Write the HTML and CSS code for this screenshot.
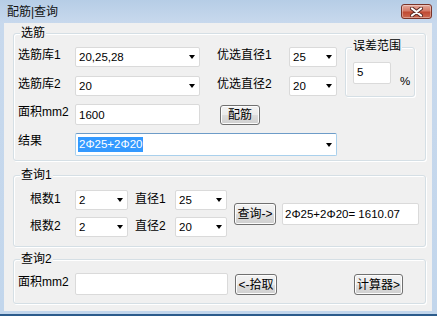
FILE: index.html
```html
<!DOCTYPE html>
<html lang="zh-CN">
<head>
    <meta charset="UTF-8">
    <title>配筋|查询</title>
    <link rel="stylesheet" href="styles.css">
</head>
<body>
<div class="window">
    <div class="titlebar">
        <span class="title">配筋|查询</span>
        <span class="close">
            <svg width="13" height="10" viewBox="0 0 13 10">
                <path d="M2 1.5 L11 8.5 M11 1.5 L2 8.5" stroke="#5a2a24" stroke-width="4" stroke-linecap="round"/>
                <path d="M2 1.5 L11 8.5 M11 1.5 L2 8.5" stroke="#fff" stroke-width="2.2" stroke-linecap="round"/>
            </svg>
        </span>
    </div>
    <div class="client">
        <!-- 选筋 -->
        <div class="group g-pick">
            <span class="caption">选筋</span>
            <span class="lbl r1 c1">选筋库1</span>
            <div class="combo r1 c2"><span>20,25,28</span></div>
            <span class="lbl r1 c4">优选直径1</span>
            <div class="combo r1 c5"><span>25</span></div>
            <div class="group err">
                <span class="caption">误差范围</span>
                <div class="textbox tb-err">5</div>
                <span class="pct">%</span>
            </div>

            <span class="lbl r2 c1">选筋库2</span>
            <div class="combo r2 c2"><span>20</span></div>
            <span class="lbl r2 c4">优选直径2</span>
            <div class="combo r2 c5"><span>20</span></div>

            <span class="lbl r3 c1">面积<i>mm2</i></span>
            <div class="textbox r3 c2 tb-area">1600</div>
            <button class="btn btn-calc">配筋</button>

            <span class="lbl r4 c1">结果</span>
            <div class="combo focus result"><span class="sel">2Φ25+2Φ20</span></div>
        </div>

        <!-- 查询1 -->
        <div class="group g-query1">
            <span class="caption">查询<i>1</i></span>
            <span class="lbl q1 k1">根数<i>1</i></span>
            <div class="combo q1 k2"><span>2</span></div>
            <span class="lbl q1 k3">直径<i>1</i></span>
            <div class="combo q1 k4"><span>25</span></div>
            <button class="btn btn-query">查询<i>-&gt;</i></button>
            <div class="textbox tb-sum">2Φ25+2Φ20= 1610.07</div>

            <span class="lbl q2 k1">根数<i>2</i></span>
            <div class="combo q2 k2"><span>2</span></div>
            <span class="lbl q2 k3">直径<i>2</i></span>
            <div class="combo q2 k4"><span>20</span></div>
        </div>

        <!-- 查询2 -->
        <div class="group g-query2">
            <span class="caption">查询<i>2</i></span>
            <span class="lbl">面积<i>mm2</i></span>
            <div class="textbox"></div>
            <button class="btn btn-pick"><i>&lt;-</i>拾取</button>
            <button class="btn btn-calculator">计算器<i>&gt;</i></button>
        </div>
    </div>
</div>
</body>
</html>
```

FILE: styles.css
```css
* {
    box-sizing: border-box;
}
body {
    margin: 0;
    font: 12px "Liberation Sans", "Noto Sans CJK SC", sans-serif;
    color: #000;
}
i {
    font-style: normal;
}
.window {
    width: 437px;
    height: 316px;
    display: flex;
    flex-direction: column;
    background: linear-gradient(#b6cde6, #c8d9ed 23px, #c2d6ec);
    border-bottom: 2px solid #2c5c8c;
}
.titlebar {
    height: 23px;
    display: flex;
    justify-content: space-between;
    align-items: flex-start;
    padding: 0 5px 0 7px;
}
.title {
    font-size: 12px;
    line-height: 14px;
    margin-top: 5px;
    color: #111;
}
.close {
    margin-top: 4px;
    width: 31px;
    height: 15px;
    display: flex;
    align-items: center;
    justify-content: center;
    border: 1px solid #7a3328;
    border-radius: 3px;
    background: linear-gradient(#e4a99c, #d47a67 45%, #c04a33 55%, #cc6a52);
    box-shadow: inset 0 0 0 1px rgba(255,255,255,0.35);
}
.client {
    flex: 1;
    margin: 0 5px 3px 4px;
    background: #f0f0f0;
    padding: 10px 6px 7px 9px;
}

/* group boxes */
.group {
    position: relative;
    border: 1px solid #d5dfe5;
    border-radius: 3px;
    box-shadow: inset 1px 1px 0 #fff, 1px 1px 0 #fff;
}
.caption {
    position: absolute;
    top: -8px;
    left: 6px;
    padding: 0 1px;
    line-height: 14px;
    background: #f0f0f0;
}
.g-pick {
    display: grid;
    grid-template-columns: 57px 125px 17px 72px 48px 8px 70px;
    grid-template-rows: 29px 28px 29px 23px;
    padding: 13px 0 4px 4px;
}
.g-query1 {
    margin-top: 14px;
    display: grid;
    grid-template-columns: 45px 53px 47px 52px 7px 42px 6px 137px;
    grid-template-rows: 27px 20px;
    padding: 14px 0 9px 16px;
}
.g-query2 {
    margin-top: 12px;
    display: grid;
    grid-template-columns: 57px 153px 7px 42px 77px 49px;
    grid-template-rows: 22px;
    padding: 13px 0 8px 4px;
}

.r1 { grid-row: 1; }
.r2 { grid-row: 2; }
.r3 { grid-row: 3; }
.r4 { grid-row: 4; }
.c1 { grid-column: 1; }
.c2 { grid-column: 2; }
.c4 { grid-column: 4; }
.c5 { grid-column: 5; }
.q1 { grid-row: 1; }
.q2 { grid-row: 2; }
.k1 { grid-column: 1; }
.k2 { grid-column: 2; }
.k3 { grid-column: 3; padding-left: 7px; }
.k4 { grid-column: 4; }

.lbl {
    line-height: 14px;
    padding-top: 1px;
    align-self: start;
    white-space: nowrap;
}
.g-query1 .lbl,
.g-query2 .lbl {
    padding-top: 2px;
}

/* controls */
.combo {
    align-self: start;
    height: 20px;
    display: flex;
    align-items: center;
    justify-content: space-between;
    padding: 0 4px 0 3px;
    background: #fff;
    border: 1px solid #dadada;
    border-radius: 2px;
    font-size: 11.5px;
}
.combo::after {
    content: "";
    border-top: 4px solid #000;
    border-left: 3.5px solid transparent;
    border-right: 3.5px solid transparent;
}
.combo.focus {
    border-color: #6d9cc8 #a9d0ec #a9d0ec #a9d0ec;
}
.result {
    grid-row: 4;
    grid-column: 2 / 6;
    height: 23px;
    padding-left: 2px;
}
.sel {
    background: #3399ff;
    color: #fff;
    padding: 1px 1px;
    line-height: 13px;
}
.textbox {
    align-self: start;
    height: 22px;
    display: flex;
    align-items: center;
    padding: 0 3px;
    background: #fff;
    border: 1px solid #dadada;
    border-radius: 2px;
    font-size: 11.5px;
}
.tb-area {
    height: 21px;
}
.err {
    grid-row: 1 / 3;
    grid-column: 7;
    height: 50px;
    align-self: start;
    display: flex;
    align-items: center;
    padding: 14px 0 0 7px;
    gap: 9px;
}
.err .caption {
    top: -9px;
    left: 6px;
}
.tb-err {
    width: 38px;
    align-items: flex-start;
    padding-top: 3px;
}
.pct {
    font-size: 11.5px;
    margin-top: 3px;
}
.tb-sum {
    grid-row: 1 / 3;
    grid-column: 8;
    align-self: center;
    padding-left: 2px;
}

.btn {
    align-self: start;
    height: 20px;
    padding: 0;
    font: 12px "Liberation Sans", "Noto Sans CJK SC", sans-serif;
    color: #000;
    line-height: 14px;
    border: 1px solid #707070;
    border-radius: 3px;
    background: linear-gradient(#f2f2f2, #ebebeb 50%, #dddddd 51%, #cfcfcf);
    box-shadow: inset 0 0 0 1px #fcfcfc;
    outline: none;
}
.btn-calc {
    grid-row: 3;
    grid-column: 4 / 6;
    justify-self: start;
    width: 40px;
    margin: 1px 0 0 3px;
}
.btn-query {
    grid-row: 1 / 3;
    grid-column: 6;
    align-self: center;
    height: 22px;
}
.btn-pick {
    grid-column: 4;
    height: 21px;
    margin-top: 1px;
}
.btn-calculator {
    grid-column: 6;
    height: 21px;
    margin-top: 1px;
}
```
